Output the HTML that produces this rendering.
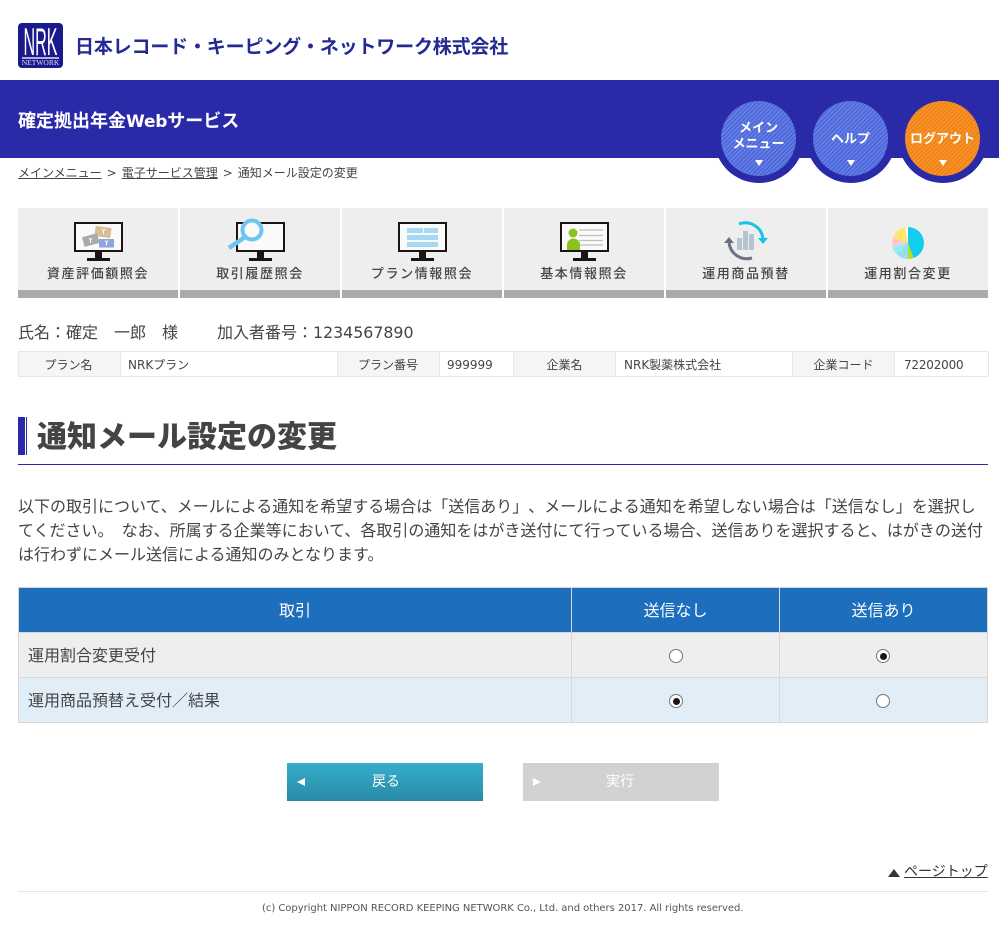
<!DOCTYPE html>
<html lang="ja">
<head>
<meta charset="utf-8">
<title>通知メール設定の変更</title>
<style>
html,body{margin:0;padding:0;background:#fff}
body{position:relative;width:999px;height:934px;overflow:hidden;font-family:"DejaVu Sans","Noto Sans CJK JP",sans-serif;color:#444;text-spacing-trim:space-all}
.a{position:absolute;white-space:nowrap}
.circ{position:absolute;border-radius:50%}
.o{width:90px;height:90px;top:93px;background:#2a2aa8}
.i{width:75px;height:75px;top:100.5px;background:repeating-linear-gradient(135deg,#6480e6 0,#6480e6 1.5px,#4d66d8 1.5px,#4d66d8 3px)}
.i.or{background:repeating-linear-gradient(135deg,#f89428 0,#f89428 1.5px,#ee8218 1.5px,#ee8218 3px)}
.ct{position:absolute;color:#fff;font-weight:bold;font-size:13px;line-height:16px;text-align:center;width:90px;white-space:nowrap}
.tri{position:absolute;top:160px;width:0;height:0;border-left:4px solid transparent;border-right:4px solid transparent;border-top:6px solid #fff}
.nav{position:absolute;top:208px;width:160px;height:82px;background:#eee;border-bottom:8px solid #aaa}
.nl{position:absolute;top:266px;width:160px;text-align:center;font-size:13px;line-height:18px;letter-spacing:1.6px;color:#444;font-weight:500;white-space:nowrap}
.pc{position:absolute;top:352px;height:24px;line-height:26px;font-size:12px;color:#444;border-left:1px solid #e8e8e8;box-sizing:border-box;white-space:nowrap}
.ph{background:#f5f5f5;text-align:center}
.pd{background:#fff;padding-left:7px}
.cell{position:absolute;box-sizing:border-box;font-size:16px;white-space:nowrap}
.h{top:588px;height:44px;line-height:46px;background:#1d6fbe;color:#fff;text-align:center}
.r1{top:633px;height:44px;line-height:46px;background:#eee}
.r2{top:678px;height:44px;line-height:46px;background:#e1edf7}
.rd{position:absolute;width:14px;height:14px;box-sizing:border-box;border:1px solid #777;border-radius:50%;background:#fff}
.rd.on::after{content:"";position:absolute;left:2.5px;top:2.5px;width:7px;height:7px;border-radius:50%;background:#1a1414}
.txt{font-size:16px;line-height:24px;color:#444}
</style>
</head>
<body>

<svg class="a" style="left:18px;top:23px" width="45" height="45" viewBox="0 0 45 45">
  <rect width="45" height="45" rx="4" fill="#1a1a8c"/>
  <text transform="translate(5.5,32) scale(0.62,1.5)" font-family="Liberation Sans" font-size="26" fill="#fff">NRK</text>
  <rect x="4" y="34" width="37" height="2" fill="#aeb0e0"/>
  <text x="22.5" y="42" text-anchor="middle" font-family="Liberation Serif" font-size="7.500" fill="#dfe0f4">NETWORK</text>
</svg>
<div class="a" style="left:75px;top:33px;font-size:19px;line-height:28px;font-weight:bold;color:#232a94;letter-spacing:-.17px">日本レコード・キーピング・ネットワーク株式会社</div>

<div class="a" style="left:0;top:80px;width:999px;height:78px;background:#2a2aa8"></div>
<div class="a" style="left:18px;top:109px;font-size:18px;line-height:26px;font-weight:bold;color:#fff">確定拠出年金<span style="font-size:17px;letter-spacing:-.2px">Web</span>サービス</div>

<div class="circ o" style="left:713.5px"></div><div class="circ i" style="left:721px"></div>
<div class="circ o" style="left:805.5px"></div><div class="circ i" style="left:813px"></div>
<div class="circ o" style="left:897.5px"></div><div class="circ i or" style="left:905px"></div>
<div class="ct" style="left:713.5px;top:121px">メイン<br>メニュー</div>
<div class="ct" style="left:805.5px;top:132px">ヘルプ</div>
<div class="ct" style="left:897.5px;top:132px">ログアウト</div>
<div class="tri" style="left:755px"></div><div class="tri" style="left:847px"></div><div class="tri" style="left:939px"></div>

<div class="a" style="left:18px;top:164px;font-size:12px;line-height:18px;color:#444"><span style="text-decoration:underline">メインメニュー</span><span style="margin:0 5px 0 5px">&gt;</span><span style="text-decoration:underline">電子サービス管理</span><span style="margin:0 5px 0 5px">&gt;</span>通知メール設定の変更</div>

<div class="nav" style="left:18px"></div>
<div class="nav" style="left:180px"></div>
<div class="nav" style="left:342px"></div>
<div class="nav" style="left:504px"></div>
<div class="nav" style="left:666px"></div>
<div class="nav" style="left:828px"></div>

<svg class="a" style="left:0;top:200px" width="999" height="70" viewBox="0 200 999 70">
  <g>
    <rect x="75" y="223" width="47" height="28" fill="#fbfafa" stroke="#1a1414" stroke-width="2"/>
    <rect x="95" y="252" width="7" height="6" fill="#1a1414"/><rect x="87" y="258" width="23" height="3" fill="#1a1414"/>
    <rect x="95" y="227" width="16" height="10" fill="#d8bd95" transform="rotate(8 103 232)"/>
    <rect x="83" y="235" width="15.500" height="10" fill="#aaa" transform="rotate(-15 91 240)"/>
    <rect x="99" y="239" width="15" height="8.500" fill="#8da6dc"/>
    <path d="M102 229l1.500 2 1.500-2M103.500 231v3M89 238l1.500 2 1.500-2M90.500 240v3M105 240.500l1.500 2 1.500-2M106.500 242.500v3" stroke="#fff" stroke-width="1" fill="none"/>
  </g>
  <g>
    <rect x="237" y="223" width="47" height="28" fill="#fbfafa" stroke="#1a1414" stroke-width="2"/>
    <rect x="257" y="252" width="7" height="6" fill="#1a1414"/><rect x="249" y="258" width="23" height="3" fill="#1a1414"/>
    <circle cx="252" cy="230" r="9.500" fill="#fbfafa" stroke="#6cc6f2" stroke-width="4"/>
    <path d="M245 237L229 248" stroke="#6cc6f2" stroke-width="4.500" fill="none"/>
  </g>
  <g>
    <rect x="399" y="223" width="47" height="28" fill="#fbfafa" stroke="#1a1414" stroke-width="2"/>
    <rect x="419" y="252" width="7" height="6" fill="#1a1414"/><rect x="411" y="258" width="23" height="3" fill="#1a1414"/>
    <path d="M407 228h16v5h-16zM424 228h14v5h-14zM407 235h31v5h-31zM407 242h31v5h-31z" fill="#a5d9f3"/>
  </g>
  <g>
    <rect x="561" y="223" width="47" height="28" fill="#fbfafa" stroke="#1a1414" stroke-width="2"/>
    <rect x="581" y="252" width="7" height="6" fill="#1a1414"/><rect x="573" y="258" width="23" height="3" fill="#1a1414"/>
    <path d="M579 230h24M579 235.500h24M579 240.500h24M579 245h24" stroke="#bdbdbd" stroke-width="1.200" fill="none"/>
    <circle cx="573" cy="233" r="4.500" fill="#8cc11f"/>
    <path d="M567 250v-5a6.500 6.500 0 0 1 13 0v5z" fill="#8cc11f"/>
  </g>
  <g>
    <path d="M737 238h5v12h-5zM743 231h5v19h-5zM749 234h5v16h-5z" fill="#b4c5ce"/>
    <path d="M739 224A18 18 0 0 1 763 238" stroke="#18c3e6" stroke-width="3" fill="none"/>
    <path d="M758 238h10l-5 6z" fill="#18c3e6"/>
    <path d="M752 258A18 18 0 0 1 729 242" stroke="#6b7280" stroke-width="3" fill="none"/>
    <path d="M724 243h10l-5-6z" fill="#6b7280"/>
  </g>
  <g>
    <path d="M908 243V227A16 16 0 0 1 913.500 258z" fill="#13cdec"/>
    <path d="M908 243L913.500 258A16 16 0 0 1 908 259z" fill="#b6e019"/>
    <path d="M908 243V259A16 16 0 0 1 896.700 254.300z" fill="#9adcee"/>
    <path d="M908 243L896.700 254.300A16 16 0 0 1 892.500 247.100z" fill="#8af0fb"/>
    <path d="M908 243L892.500 247.100A16 16 0 0 1 893 237.500z" fill="#ffcbd0"/>
    <path d="M908 243L893 237.500A16 16 0 0 1 905.200 227.200z" fill="#ffe66e"/>
    <path d="M908 243L905.200 227.200A16 16 0 0 1 908 227z" fill="#fff"/>
  </g>
</svg>

<div class="nl" style="left:18px">資産評価額照会</div>
<div class="nl" style="left:180px">取引履歴照会</div>
<div class="nl" style="left:342px">プラン情報照会</div>
<div class="nl" style="left:504px">基本情報照会</div>
<div class="nl" style="left:666px">運用商品預替</div>
<div class="nl" style="left:828px">運用割合変更</div>

<div class="a" style="left:18px;top:321px;font-size:16px;line-height:24px;color:#444">氏名：確定　一郎　様</div>
<div class="a" style="left:217px;top:321px;font-size:16px;line-height:24px;color:#444">加入者番号：<span style="font-size:15.800px">1234567890</span></div>

<div class="a" style="left:18px;top:351px;width:971px;height:26px;box-sizing:border-box;border:1px solid #e8e8e8;background:#fff"></div>
<div class="pc ph" style="left:19px;width:101px;border-left:0;padding-right:2px">プラン名</div>
<div class="pc pd" style="left:120px;width:217px">NRKプラン</div>
<div class="pc ph" style="left:337px;width:102px;padding-right:1px">プラン番号</div>
<div class="pc pd" style="left:439px;width:74px">999999</div>
<div class="pc ph" style="left:513px;width:102px">企業名</div>
<div class="pc pd" style="left:615px;width:177px;padding-left:8px">NRK製薬株式会社</div>
<div class="pc ph" style="left:792px;width:102px">企業コード</div>
<div class="pc pd" style="left:894px;width:94px;padding-left:9px;letter-spacing:-.2px">72202000</div>

<div class="a" style="left:18px;top:417px;width:7px;height:38px;background:#2a2aa8"></div>
<div class="a" style="left:26px;top:417px;width:1px;height:38px;background:#2a2aa8"></div>
<div class="a" style="left:37px;top:416px;font-size:30px;line-height:44px;font-weight:900;color:#444">通知メール設定の変更</div>
<div class="a" style="left:18px;top:464px;width:970px;height:1px;background:#2a2aa8"></div>

<div class="a txt" style="left:18px;top:495px">以下の取引について、メールによる通知を希望する場合は「送信あり」、メールによる通知を希望しない場合は「送信なし」を選択し</div>
<div class="a txt" style="left:18px;top:519px;word-spacing:3px">てください。 なお、所属する企業等において、各取引の通知をはがき送付にて行っている場合、送信ありを選択すると、はがきの送付</div>
<div class="a txt" style="left:18px;top:543px">は行わずにメール送信による通知のみとなります。</div>

<div class="a" style="left:18px;top:587px;width:970px;height:136px;background:#d8d8d8"></div>
<div class="cell h" style="left:19px;width:552px">取引</div>
<div class="cell h" style="left:572px;width:207px">送信なし</div>
<div class="cell h" style="left:780px;width:207px">送信あり</div>
<div class="cell r1" style="left:19px;width:552px;padding-left:9px">運用割合変更受付</div>
<div class="cell r1" style="left:572px;width:207px"></div>
<div class="cell r1" style="left:780px;width:207px"></div>
<div class="cell r2" style="left:19px;width:552px;padding-left:9px">運用商品預替え受付／結果</div>
<div class="cell r2" style="left:572px;width:207px"></div>
<div class="cell r2" style="left:780px;width:207px"></div>
<div class="rd" style="left:669px;top:649px"></div>
<div class="rd on" style="left:876px;top:649px"></div>
<div class="rd on" style="left:669px;top:694px"></div>
<div class="rd" style="left:876px;top:694px"></div>

<div class="a" style="left:287px;top:763px;width:196px;height:38px;box-sizing:border-box;padding-left:2px;background:linear-gradient(#35aecc,#2a8aa6);color:#fff;font-size:14px;line-height:38px;text-align:center">戻る</div>
<div class="a" style="left:297px;top:778px;width:0;height:0;border-top:4px solid transparent;border-bottom:4px solid transparent;border-right:8px solid #fff"></div>
<div class="a" style="left:523px;top:763px;width:196px;height:38px;box-sizing:border-box;padding-right:2px;background:#d2d2d2;color:#fff;font-size:14px;line-height:38px;text-align:center">実行</div>
<div class="a" style="left:533px;top:778px;width:0;height:0;border-top:4px solid transparent;border-bottom:4px solid transparent;border-left:8px solid #fff"></div>

<div class="a" style="left:888px;top:869px;width:0;height:0;border-left:6px solid transparent;border-right:6px solid transparent;border-bottom:8px solid #333"></div>
<div class="a" style="left:904px;top:862px;font-size:14px;line-height:20px;color:#333;text-decoration:underline">ページトップ</div>
<div class="a" style="left:18px;top:891px;width:970px;height:1px;background:#e5e5e5"></div>
<div class="a" style="left:262px;top:901px;font-size:10px;letter-spacing:-.033px;line-height:16px;color:#555">(c) Copyright NIPPON RECORD KEEPING NETWORK Co., Ltd. and others 2017. All rights reserved.</div>

</body>
</html>
